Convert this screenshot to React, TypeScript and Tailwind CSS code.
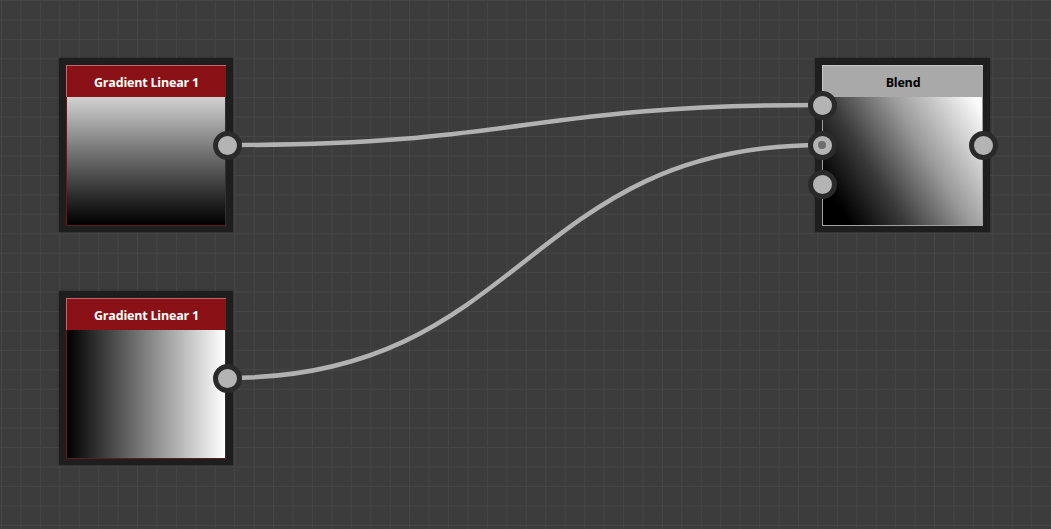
import React from 'react'

type Port = { x: number; y: number; dot?: boolean }

// canvas coordinates of every port, wires are drawn between them
const ports = {
  g1Out: { x: 227, y: 145 },
  g2Out: { x: 227, y: 378 },
  bIn1: { x: 822, y: 105 },
  bIn2: { x: 822, y: 145, dot: true },
  bIn3: { x: 822, y: 184 },
  bOut: { x: 983, y: 145 }
}

const wirePath = (a: Port, b: Port) => {
  const dx = (b.x - a.x) / 2
  return `M ${a.x} ${a.y} C ${a.x + dx} ${a.y}, ${b.x - dx} ${b.y}, ${b.x} ${b.y}`
}

const PortDot: React.FC<{ port: Port }> = ({ port }) => (
  <div
    className="absolute w-[29px] h-[29px] -ml-[14.5px] -mt-[14.5px] rounded-full border-[5px] border-[#2a2a2a] bg-[#b4b4b4] flex items-center justify-center"
    style={{ left: port.x, top: port.y }}
  >
    {port.dot && <div className="w-[8px] h-[8px] rounded-full bg-[#6e6e6e]" />}
  </div>
)

interface NodeProps {
  title: string
  left: number
  top: number
  width: number
  variant: 'red' | 'gray'
  preview: string
}

const GraphNode: React.FC<NodeProps> = ({ title, left, top, width, variant, preview }) => {
  const isRed = variant === 'red'
  return (
    <div
      className="absolute bg-[#1e1e1e] p-[7px] pb-[6px] shadow-[0_0_2px_rgba(0,0,0,0.4)]"
      style={{ left, top, width }}
    >
      <div
        className={
          isRed
            ? 'h-[32px] pt-[3px] flex items-center justify-center bg-[#8a1116] border-t border-l border-[#c0686c] text-white'
            : 'h-[32px] pt-[3px] flex items-center justify-center bg-[#a9a9a9] border-t border-l border-[#c4c4c4] text-black'
        }
      >
        <span className="text-[12.5px] font-bold font-['Open_Sans',sans-serif] tracking-[-0.2px]">{title}</span>
      </div>
      <div
        className={
          isRed
            ? `h-[129px] border-x border-b border-[#5a1d20] ${preview}`
            : `h-[129px] border-x border-b border-[#a0a0a0] ${preview}`
        }
      />
    </div>
  )
}

export default function App() {
  return (
    <div className="relative w-[1051px] h-[529px] overflow-hidden bg-[#3c3c3c] bg-[linear-gradient(#464646_1px,transparent_1px),linear-gradient(90deg,#464646_1px,transparent_1px)] bg-[size:19.45px_19.45px] bg-[position:1px_0px]">
      <GraphNode
        title="Gradient Linear 1"
        left={59}
        top={58}
        width={174}
        variant="red"
        preview="bg-[linear-gradient(180deg,#d2d2d2_0%,#7a7a7a_40%,#262626_80%,#000_100%)]"
      />
      <GraphNode
        title="Gradient Linear 1"
        left={59}
        top={291}
        width={174}
        variant="red"
        preview="bg-[linear-gradient(90deg,#000_0%,#fff_100%)]"
      />
      <GraphNode
        title="Blend"
        left={815}
        top={58}
        width={175}
        variant="gray"
        preview="bg-[linear-gradient(58deg,#000_12%,#3a3a3a_35%,#9a9a9a_62%,#fff_98%)]"
      />

      {/* wires */}
      <svg className="absolute inset-0 pointer-events-none" width={1051} height={529}>
        <path d={wirePath(ports.g1Out, ports.bIn1)} fill="none" stroke="#b2b2b2" strokeWidth={4.5} />
        <path d={wirePath(ports.g2Out, ports.bIn2)} fill="none" stroke="#b2b2b2" strokeWidth={4.5} />
      </svg>

      {Object.values(ports).map((p, i) => (
        <PortDot key={i} port={p} />
      ))}
    </div>
  )
}
